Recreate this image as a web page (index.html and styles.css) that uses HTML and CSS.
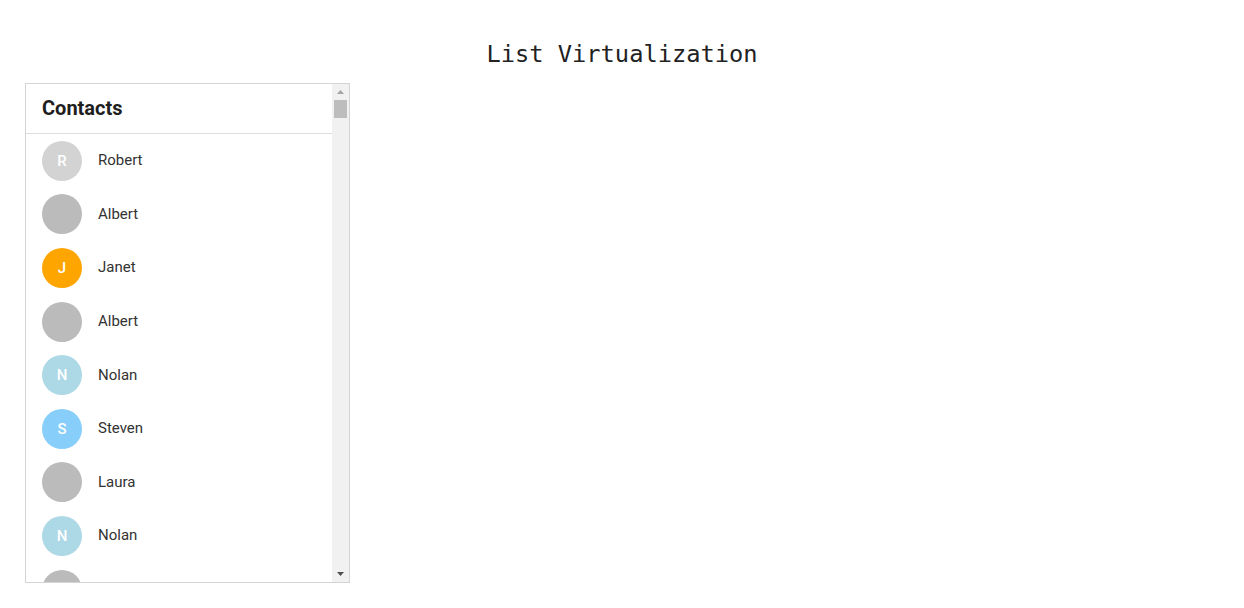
FILE: index.html
```html
<!DOCTYPE html>
<html>
<head>
<meta charset="utf-8">
<link rel="stylesheet" href="styles.css">
</head>
<body>
<h1 class="title">List Virtualization</h1>
<div class="contacts">
  <div class="pane">
    <div class="header">Contacts</div>
    <ul class="list">
      <li class="item"><span class="avatar lightgray">R</span><span class="name">Robert</span></li>
      <li class="item"><span class="avatar gray"></span><span class="name">Albert</span></li>
      <li class="item"><span class="avatar orange">J</span><span class="name">Janet</span></li>
      <li class="item"><span class="avatar gray"></span><span class="name">Albert</span></li>
      <li class="item"><span class="avatar blue">N</span><span class="name">Nolan</span></li>
      <li class="item"><span class="avatar sky">S</span><span class="name">Steven</span></li>
      <li class="item"><span class="avatar gray"></span><span class="name">Laura</span></li>
      <li class="item"><span class="avatar blue">N</span><span class="name">Nolan</span></li>
      <li class="item"><span class="avatar gray"></span></li>
    </ul>
  </div>
  <div class="scrollbar">
    <div class="sb-btn">
      <svg width="7" height="4" viewBox="0 0 7 4"><path d="M3.5 0L7 4H0z" fill="#a3a3a3"/></svg>
    </div>
    <div class="sb-track"><div class="sb-thumb"></div></div>
    <div class="sb-btn">
      <svg width="7" height="4" viewBox="0 0 7 4"><path d="M0 0H7L3.5 4z" fill="#505050"/></svg>
    </div>
  </div>
</div>
</body>
</html>
```
FILE: styles.css
```css
html, body {
  margin: 0;
  padding: 0;
  background: #fff;
}
body {
  font-family: Roboto, "Liberation Sans", sans-serif;
  color: #333;
}
.title {
  margin: 39px 0 14px;
  font-family: "DejaVu Sans Mono", "Liberation Mono", monospace;
  font-weight: normal;
  font-size: 23.7px;
  line-height: 30px;
  text-align: center;
  color: #222;
}
.contacts {
  margin-left: 25px;
  width: 325px;
  height: 500px;
  box-sizing: border-box;
  border: 1px solid #d4d4d4;
  display: flex;
  overflow: hidden;
}
.pane {
  flex: 1;
  min-width: 0;
  overflow: hidden;
}
.scrollbar {
  width: 17px;
  flex: none;
  background: #f1f1f1;
  display: flex;
  flex-direction: column;
}
.sb-btn {
  height: 16px;
  display: flex;
  align-items: center;
  justify-content: center;
  flex: none;
}
.sb-btn svg {
  display: block;
}
.sb-track {
  flex: 1;
  padding: 0 2px;
}
.sb-thumb {
  height: 18px;
  background: #bdbdbd;
}
.header {
  box-sizing: border-box;
  height: 50px;
  padding-bottom: 2px;
  border-bottom: 1px solid #ddd;
  padding-left: 16px;
  display: flex;
  align-items: center;
  font-size: 20px;
  font-weight: bold;
  color: #1e1e1e;
}
.list {
  list-style: none;
  margin: 0;
  padding: 0;
}
.item {
  height: 53.6px;
  display: flex;
  align-items: center;
  gap: 16px;
  padding-left: 16px;
  font-size: 15px;
}
.avatar {
  width: 40px;
  height: 40px;
  border-radius: 50%;
  display: flex;
  align-items: center;
  justify-content: center;
  color: #fff;
  font-size: 15px;
  font-weight: 500;
  flex: none;
}
.lightgray { background: #d3d3d3; }
.gray { background: #bbbbbb; }
.orange { background: #ffa500; }
.blue { background: #add8e6; }
.sky { background: #87cefa; }
.name {
  color: #333;
  margin-bottom: 1px;
}
```
